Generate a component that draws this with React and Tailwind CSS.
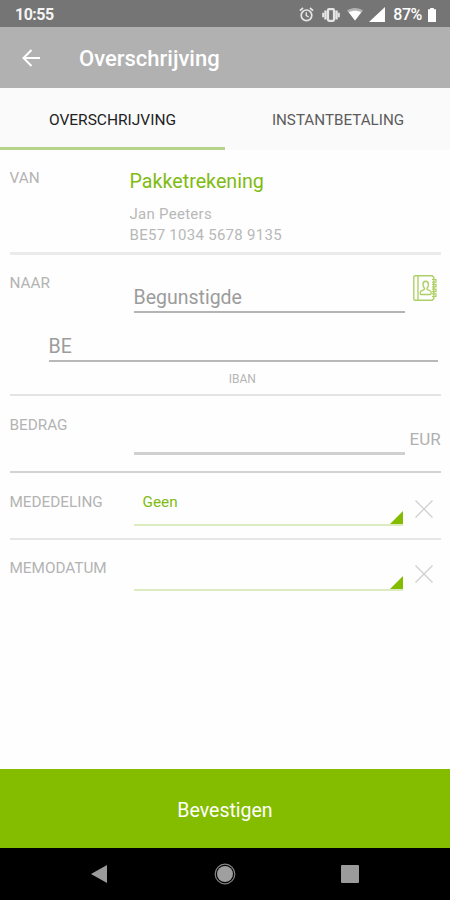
const StatusBar = () => (
  <div className="flex h-[27px] items-center bg-[#757575] pl-[15px] pr-[14px] pt-0.5 text-white">
    <span className="text-[16px] font-bold leading-4 tracking-[-0.5px] text-[#f4f4f4]">10:55</span>
    <div className="ml-auto flex items-center">
      <svg className="h-[15px] w-[15px]" viewBox="0 0 15 15" fill="none" stroke="#e6e6e6">
        <circle cx="7.5" cy="8.3" r="5.3" strokeWidth="1.7" />
        <path d="M7.3 5.3v3.3l2.4 1.4" strokeWidth="1.4" />
        <path d="M.9 3.6 4 1M14.1 3.6 11 1" strokeWidth="1.7" />
      </svg>
      <svg className="ml-2 h-[14px] w-[18px]" viewBox="0 0 18 14" fill="none" stroke="#e6e6e6">
        <rect x="6" y="1.2" width="6" height="11.6" rx="1" strokeWidth="2.2" />
        <path d="M3.5 2.5v9M14.5 2.5v9" strokeWidth="2.4" />
        <path d="M1.2 4.7v4.6M16.8 4.7v4.6" strokeWidth="2" />
      </svg>
      <svg className="ml-[7px] h-[13px] w-4" viewBox="0 0 16 13" fill="#fff">
        <path d="M0 2.6C4.6-.8 11.4-.8 16 2.6L8 12.6z" opacity=".45" />
        <path d="M1.8 4.2c3.8-2 8.6-2 12.4 0L8 12.6z" />
      </svg>
      <svg className="ml-1.5 h-[15px] w-4" viewBox="0 0 16 15" fill="#fff">
        <path d="M16 0v15H0z" />
      </svg>
      <span className="ml-2 text-[16px] font-medium leading-4 tracking-[-0.4px]">87%</span>
      <svg className="ml-1.5 h-[14px] w-2" viewBox="0 0 8 14" fill="#fff">
        <path d="M2.2 0h3.6v1.3H8V14H0V1.3h2.2z" />
      </svg>
    </div>
  </div>
);

const Header = () => (
  <header className="flex h-[61px] items-center bg-[#b1b1b1] pl-[22px] text-white">
    <svg className="h-[18px] w-[18px]" viewBox="0 0 18 18" fill="none" stroke="#fff" strokeWidth="2">
      <path d="M18 9H1.5M9.5 1 1.5 9l8 8" />
    </svg>
    <h1 className="ml-[39px] pt-0.5 text-[22px] font-medium leading-6">Overschrijving</h1>
  </header>
);

const Tabs = () => (
  <nav className="grid h-[62px] grid-cols-2 bg-[#fafafa] text-center">
    <button className="h-[62px] border-b-[3px] border-[#b5d48a] pt-1.5 text-[15.5px] text-[#222]">
      OVERSCHRIJVING
    </button>
    <button className="h-[62px] border-b-[3px] border-[#fafafa] pl-px pt-1.5 text-[15.2px] text-[#5c5c5c]">
      INSTANTBETALING
    </button>
  </nav>
);

const Label = ({ children }) => (
  <span className="w-[124px] shrink-0 text-[15.3px] leading-4 text-[#b3b3b3]">{children}</span>
);

const ContactBook = () => (
  <svg className="ml-2 h-[26px] w-6" viewBox="0 0 24 26" fill="none" stroke="#add065" strokeWidth="1.4">
    <path d="M19.2.8H2.1Q.8.8.8 2.1v21.8q0 1.3 1.3 1.3h17.1l1.6-1.6V2.4zM5 .8v24.4" />
    <path d="M19 4.5h4v2.6h-4M19 9.3h4v2.6h-4M19 14.1h4v2.6h-4M19 18.9h4v2.6h-4" strokeWidth="1.2" />
    <path d="M10 9.5c0-4.4 5.4-4.4 5.4 0 0 2-.8 3-1.3 3.5v1.3l3.3 1.7c1 .6 1 3.5 0 3.5H8c-1 0-1-2.9 0-3.5l3.4-1.7V13c-.5-.5-1.4-1.5-1.4-3.5z" />
  </svg>
);

const ClearIcon = () => (
  <svg className="h-[18px] w-[18px]" viewBox="0 0 18 18" fill="none" stroke="#d0d0d0" strokeWidth="1.3">
    <path d="m.5.5 17 17M17.5.5l-17 17" />
  </svg>
);

const Select = ({ value }) => (
  <div className="flex w-[269px] items-end justify-between border-b-2 border-[#dcebc0]">
    <span className="h-[30px] pl-[9px] text-[15.3px] leading-4 text-[#80bb12]">{value}</span>
    <svg className="h-[13px] w-[13px]" viewBox="0 0 13 13" fill="#84bd00">
      <path d="M13 0v13H0z" />
    </svg>
  </div>
);

const NavBar = () => (
  <div className="flex h-[52px] items-center justify-between bg-black pl-[91px] pr-[91px]">
    <svg className="h-[18px] w-4" viewBox="0 0 16 18" fill="#9b9b9b">
      <path d="M16 0v18L0 9z" />
    </svg>
    <svg className="ml-0.5 h-[22px] w-[22px]" viewBox="0 0 22 22">
      <circle cx="11" cy="11" r="9.8" fill="none" stroke="#858585" strokeWidth="1.2" />
      <circle cx="11" cy="11" r="8" fill="#9f9f9f" />
    </svg>
    <svg className="h-[18px] w-[18px]" viewBox="0 0 18 18">
      <rect width="18" height="18" rx="1" fill="#9b9b9b" />
    </svg>
  </div>
);

const App = () => {
  return (
    <div className="flex h-[900px] w-[450px] flex-col bg-[#fefefe] font-['Roboto',sans-serif]">
      <StatusBar />
      <Header />
      <Tabs />

      <main className="flex-1 pl-[9.5px] pr-[9px]">
        {/* Van */}
        <section className="flex h-[105px] border-b-[3px] border-[#ebebeb] pt-5">
          <Label>VAN</Label>
          <div className="-ml-1">
            <h2 className="text-[19.7px] leading-6 text-[#80bb12]">Pakketrekening</h2>
            <p className="mt-2.5 text-[15px] leading-[21px] tracking-[0.28px] text-[#b8b8b8]">
              Jan Peeters
              <br />
              BE57 1034 5678 9135
            </p>
          </div>
        </section>

        {/* Naar */}
        <section className="h-[141px] border-b-2 border-[#e4e4e4] pt-5">
          <div className="flex">
            <Label>NAAR</Label>
            <div className="mt-3 h-[26px] w-[271px] border-b-2 border-[#b4b4b4] text-[19.5px] leading-[22px] text-[#9c9c9c]">
              Begunstigde
            </div>
            <ContactBook />
          </div>
          <div className="ml-[39px] mt-[22px] h-[27px] w-[389px] border-b-2 border-[#b8b8b8] text-[19.5px] leading-6 text-[#9c9c9c]">
            BE
          </div>
          <p className="mt-[11px] pl-[34px] text-center text-[12px] leading-3 text-[#b5b5b5]">IBAN</p>
        </section>

        {/* Bedrag */}
        <section className="flex h-[77px] border-b-2 border-[#d3d3d3] pt-[21px]">
          <Label>BEDRAG</Label>
          <div className="h-[38px] w-[271px] border-b-[3px] border-[#d0d0d0]" />
          <span className="ml-[5px] mt-3.5 text-[17px] leading-4 text-[#b0b0b0]">EUR</span>
        </section>

        {/* Mededeling */}
        <section className="flex h-[67px] border-b-2 border-[#e6e6e6] pt-[21px]">
          <Label>MEDEDELING</Label>
          <div className="flex h-8">
            <Select value="Geen" />
            <div className="ml-3 mt-1.5">
              <ClearIcon />
            </div>
          </div>
        </section>

        {/* Memodatum */}
        <section className="flex pt-5">
          <Label>MEMODATUM</Label>
          <div className="flex h-[31px]">
            <Select value="" />
            <div className="ml-3 mt-[5px]">
              <ClearIcon />
            </div>
          </div>
        </section>
      </main>

      <button className="h-[79px] bg-[#84bd00] pt-1 text-[19.5px] text-white">Bevestigen</button>
      <NavBar />
    </div>
  );
};

export default App;
